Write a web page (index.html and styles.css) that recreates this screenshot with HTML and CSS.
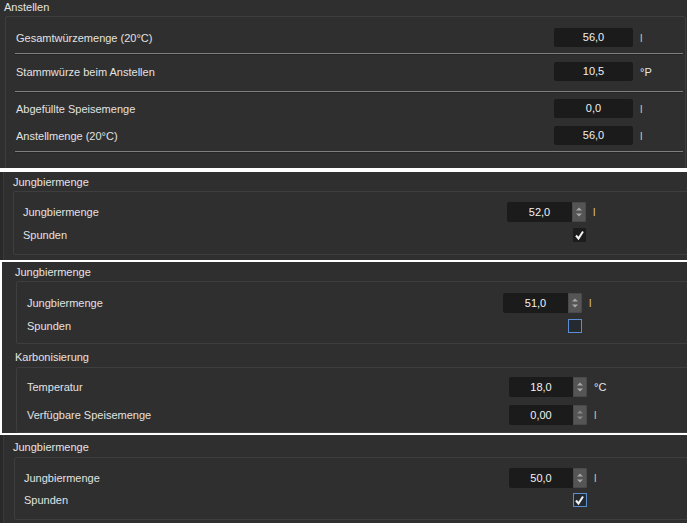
FILE: index.html
```html
<!DOCTYPE html>
<html lang="de">
<head>
    <meta charset="UTF-8">
    <meta name="viewport" content="width=device-width, initial-scale=1.0">
    <title>Anstellen</title>
    <link rel="stylesheet" href="styles.css">
</head>
<body>
    <!-- Anstellen -->
    <section class="shot shot-1">
        <div class="group">
            <div class="group-title">Anstellen</div>
            <div class="frame">
                <div class="row">
                    <span class="label">Gesamtwürzemenge (20°C)</span>
                    <span class="field">56,0</span>
                    <span class="unit unit-l">l</span>
                </div>
                <div class="sep"></div>
                <div class="row">
                    <span class="label">Stammwürze beim Anstellen</span>
                    <span class="field">10,5</span>
                    <span class="unit">°P</span>
                </div>
                <div class="sep loose"></div>
                <div class="row">
                    <span class="label">Abgefüllte Speisemenge</span>
                    <span class="field">0,0</span>
                    <span class="unit unit-l">l</span>
                </div>
                <div class="row">
                    <span class="label">Anstellmenge (20°C)</span>
                    <span class="field">56,0</span>
                    <span class="unit unit-l">l</span>
                </div>
                <div class="sep"></div>
            </div>
        </div>
    </section>

    <!-- Jungbiermenge, gespundet -->
    <section class="shot shot-2">
        <div class="group">
            <div class="group-title">Jungbiermenge</div>
            <div class="frame">
                <div class="row">
                    <span class="label">Jungbiermenge</span>
                    <span class="spin">
                        <span class="spin-value">52,0</span>
                        <span class="spin-btn"><svg width="14" height="20" viewBox="0 0 14 20"><path d="M4 8.5 7 5.5 10 8.5Z M4 11.5 7 14.5 10 11.5Z" fill="#a8a8a8"/></svg></span>
                    </span>
                    <span class="unit unit-l">l</span>
                </div>
                <div class="row">
                    <span class="label">Spunden</span>
                    <span class="check checked"><svg width="13" height="14" viewBox="0 0 13 14"><path d="M3 7.5 5.5 10.5 10 3.5" fill="none" stroke="#f2f2f2" stroke-width="2"/></svg></span>
                    <span class="unit"></span>
                </div>
            </div>
        </div>
    </section>

    <!-- Jungbiermenge + Karbonisierung -->
    <section class="shot shot-3">
        <div class="group">
            <div class="group-title">Jungbiermenge</div>
            <div class="frame">
                <div class="row">
                    <span class="label">Jungbiermenge</span>
                    <span class="spin">
                        <span class="spin-value">51,0</span>
                        <span class="spin-btn"><svg width="14" height="20" viewBox="0 0 14 20"><path d="M4 8.5 7 5.5 10 8.5Z M4 11.5 7 14.5 10 11.5Z" fill="#a8a8a8"/></svg></span>
                    </span>
                    <span class="unit unit-l">l</span>
                </div>
                <div class="row">
                    <span class="label">Spunden</span>
                    <span class="check focus"></span>
                    <span class="unit"></span>
                </div>
            </div>
        </div>
        <div class="group group-karbo">
            <div class="group-title">Karbonisierung</div>
            <div class="frame">
                <div class="row">
                    <span class="label">Temperatur</span>
                    <span class="spin">
                        <span class="spin-value">18,0</span>
                        <span class="spin-btn"><svg width="14" height="20" viewBox="0 0 14 20"><path d="M4 8.5 7 5.5 10 8.5Z M4 11.5 7 14.5 10 11.5Z" fill="#a8a8a8"/></svg></span>
                    </span>
                    <span class="unit">°C</span>
                </div>
                <div class="row">
                    <span class="label">Verfügbare Speisemenge</span>
                    <span class="spin">
                        <span class="spin-value">0,00</span>
                        <span class="spin-btn"><svg width="14" height="20" viewBox="0 0 14 20"><path d="M4 8.5 7 5.5 10 8.5Z M4 11.5 7 14.5 10 11.5Z" fill="#8a8a8a"/></svg></span>
                    </span>
                    <span class="unit unit-l">l</span>
                </div>
            </div>
        </div>
    </section>

    <!-- Jungbiermenge, gespundet mit Fokus -->
    <section class="shot shot-4">
        <div class="group">
            <div class="group-title">Jungbiermenge</div>
            <div class="frame">
                <div class="row">
                    <span class="label">Jungbiermenge</span>
                    <span class="spin">
                        <span class="spin-value">50,0</span>
                        <span class="spin-btn"><svg width="14" height="20" viewBox="0 0 14 20"><path d="M4 8.5 7 5.5 10 8.5Z M4 11.5 7 14.5 10 11.5Z" fill="#a8a8a8"/></svg></span>
                    </span>
                    <span class="unit unit-l">l</span>
                </div>
                <div class="row">
                    <span class="label">Spunden</span>
                    <span class="check checked focus"><svg width="13" height="14" viewBox="0 0 13 14"><path d="M3 7.5 5.5 10.5 10 3.5" fill="none" stroke="#f2f2f2" stroke-width="2"/></svg></span>
                    <span class="unit"></span>
                </div>
            </div>
        </div>
    </section>
</body>
</html>
```

FILE: styles.css
```css
* {
    margin: 0;
    padding: 0;
    box-sizing: border-box;
}

body {
    background: #ffffff;
    font-family: 'Liberation Sans', Arial, sans-serif;
    font-size: 11px;
    color: #e2e2e2;
}

/* one cut-out of the dark Qt window */
.shot {
    background: #2f2f2f;
    overflow: hidden;
}

.shot-1 {
    height: 168px;
    margin-bottom: 4px;
    padding: 0 1px 0 5px;
    --field-w: 79px;
    --unit-w: 43px;
    --pad-bottom: 30px;
}

.shot-2 {
    height: 88px;
    margin-bottom: 2px;
    padding: 3px 0 0 10px;
    border-left: 3px solid #292929;
    box-shadow: inset 1px 0 #3a3a3a;
    --field-w: 79px;
    --unit-w: 97px;
    --pad-top: 10px;
    --pad-bottom: 9px;
    --row-gap: 3px;
}

.shot-3 {
    height: 171px;
    margin-bottom: 2px;
    padding: 3px 0 0 14px;
    border-left: 2px solid #ffffff;
    --field-w: 79px;
    --unit-w: 101px;
    --pad-top: 11px;
    --pad-bottom: 7px;
    --row-gap: 3px;
}

.shot-4 {
    height: 88px;
    padding: 5px 0 0 11px;
    border-left: 3px solid #292929;
    box-shadow: inset 1px 0 #3a3a3a;
    --field-w: 78px;
    --unit-w: 96px;
    --pad-top: 10px;
    --pad-bottom: 9px;
    --row-gap: 2px;
    --frame-top: 3px;
}

.group-karbo {
    margin-top: 6px;
    --field-w: 78px;
    --unit-w: 96px;
    --pad-top: 9px;
    --row-gap: 8px;
    --frame-top: 3px;
}

.group-title {
    height: 14px;
    line-height: 14px;
    margin-left: -1px;
    color: #e4e4e4;
}

.shot-2 .group-title {
    margin-left: 0;
}

.frame {
    margin-top: var(--frame-top, 2px);
    margin-right: -4px;
    padding: var(--pad-top, 11px) 0 var(--pad-bottom, 9px) 10px;
    border: 1px solid #3e3e3e;
    border-radius: 2px;
}

.shot-2 .frame,
.shot-4 .frame {
    padding-left: 9px;
}

.shot-1 .frame {
    margin-right: 0;
    padding-right: 2px;
}

.row {
    display: grid;
    grid-template-columns: 1fr var(--field-w) var(--unit-w);
    column-gap: 7px;
    align-items: center;
    height: 20px;
}

.row + .row {
    margin-top: var(--row-gap, 8px);
}

.shot-1 .row {
    height: 19px;
}

/* horizontal line between rows */
.sep {
    height: 2px;
    margin: 6px 0 7px -1px;
    border-top: 1px solid #7e7e7e;
    border-bottom: 1px solid #262626;
}

.sep.loose {
    margin: 10px 0 6px -1px;
}

.label {
    color: #e2e2e2;
    white-space: nowrap;
}

.unit {
    color: #e6e6e6;
}

.unit-l {
    color: #d9c596;
}

/* plain read-only field */
.field {
    height: 19px;
    line-height: 19px;
    background: #1b1b1b;
    border-radius: 2px;
    text-align: center;
    color: #f0f0f0;
}

/* spin box */
.spin {
    display: flex;
    height: 20px;
}

.spin-value {
    flex: 1;
    line-height: 20px;
    background: #1b1b1b;
    border-radius: 2px 0 0 2px;
    text-align: center;
    color: #f2f2f2;
}

.spin-btn {
    width: 14px;
    background: #555555;
    border-radius: 0 2px 2px 0;
    box-shadow: inset 0 0 0 1px #4a4a4a;
}

.spin-btn svg {
    display: block;
}

/* check box */
.check {
    justify-self: end;
    width: 13px;
    height: 14px;
    background: #1c1c1c;
}

.check svg {
    display: block;
}

.check.focus {
    border: 1px solid #5a8fd2;
    background: #252a31;
    width: 14px;
}

.check.focus svg {
    margin: -1px 0 0 -1px;
}
```
